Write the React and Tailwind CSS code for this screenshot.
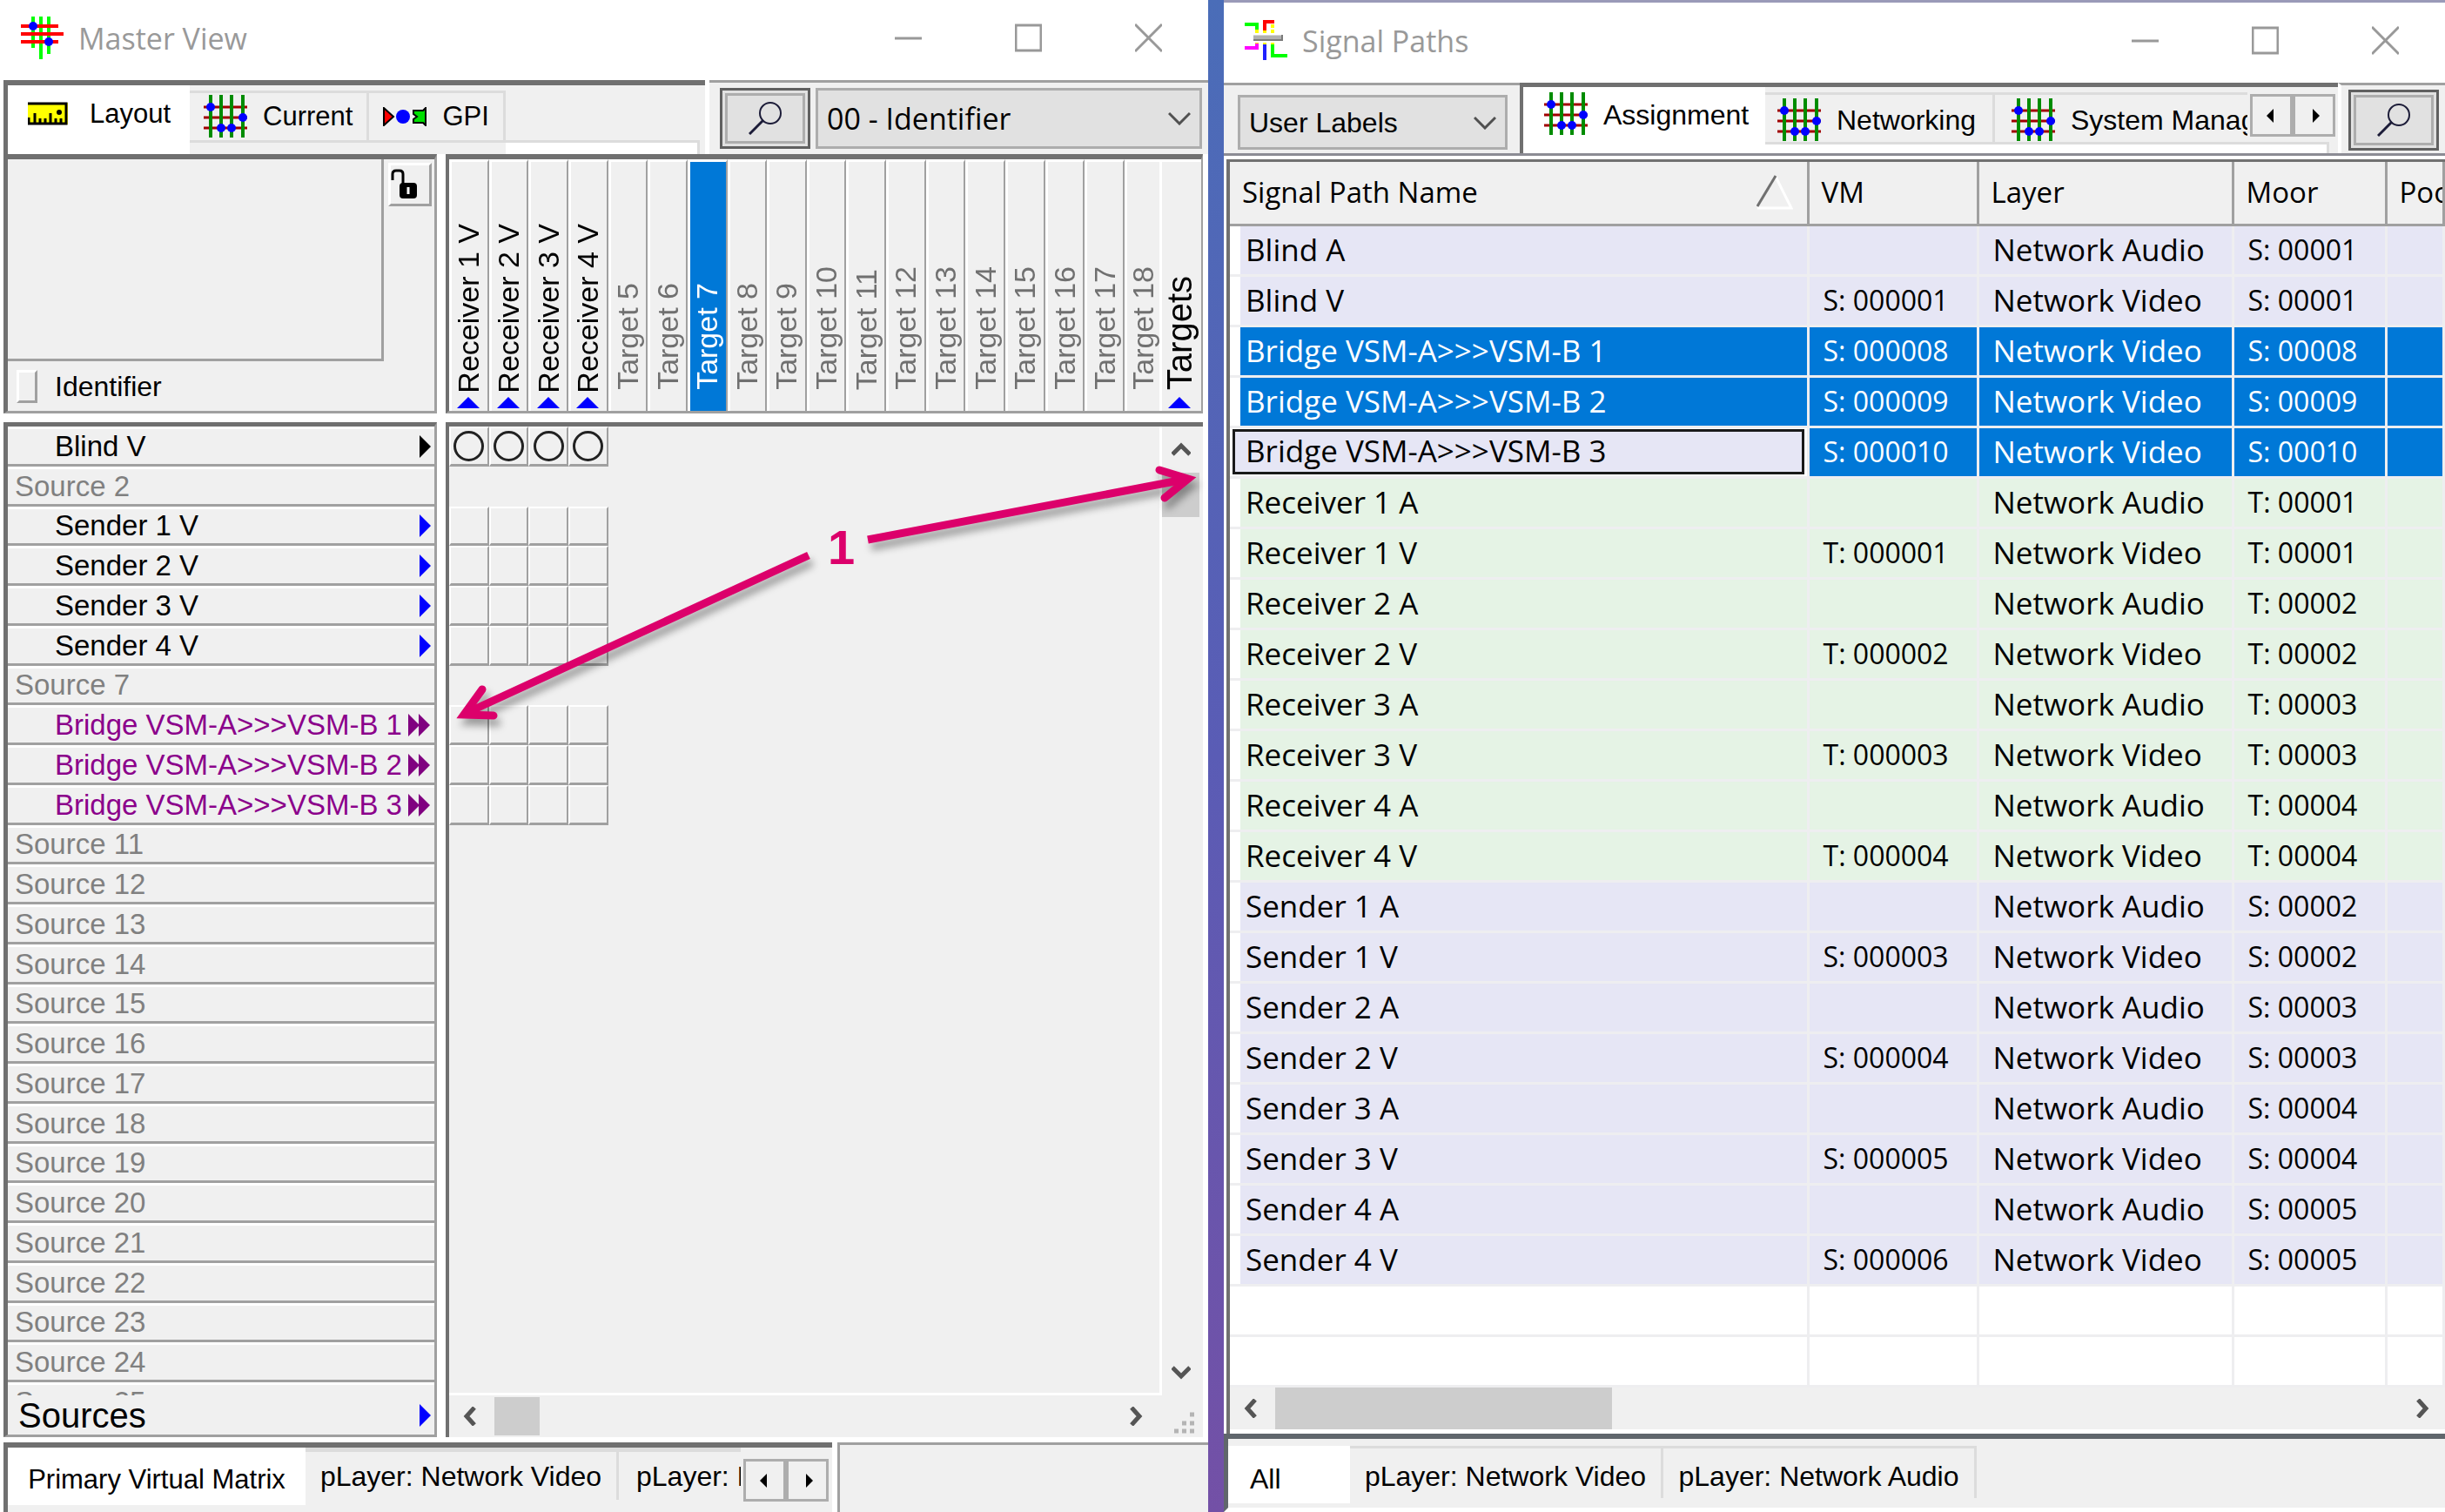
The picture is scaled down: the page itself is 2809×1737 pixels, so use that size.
import { useState } from 'react'
import clsx from 'clsx'

const sources = [
  { name: 'Blind V', kind: 'blind', cells: 'circle' },
  { name: 'Source 2', kind: 'empty' },
  { name: 'Sender 1 V', kind: 'sender', cells: 'plain' },
  { name: 'Sender 2 V', kind: 'sender', cells: 'plain' },
  { name: 'Sender 3 V', kind: 'sender', cells: 'plain' },
  { name: 'Sender 4 V', kind: 'sender', cells: 'plain' },
  { name: 'Source 7', kind: 'empty' },
  { name: 'Bridge VSM-A>>>VSM-B 1', kind: 'bridge', cells: 'plain' },
  { name: 'Bridge VSM-A>>>VSM-B 2', kind: 'bridge', cells: 'plain' },
  { name: 'Bridge VSM-A>>>VSM-B 3', kind: 'bridge', cells: 'plain' },
  ...Array.from({ length: 15 }, (_, i) => ({ name: `Source ${i + 11}`, kind: 'empty' })),
]

const targets = [
  ...[1, 2, 3, 4].map(n => ({ name: `Receiver ${n} V`, used: true })),
  ...Array.from({ length: 14 }, (_, i) => ({ name: `Target ${i + 5}`, selected: i === 2 })),
]

// name, vm, layer, moor, tone
const paths = [
  ['Blind A', '', 'Network Audio', 'S: 00001', 'source'],
  ['Blind V', 'S: 000001', 'Network Video', 'S: 00001', 'source'],
  ['Bridge VSM-A>>>VSM-B 1', 'S: 000008', 'Network Video', 'S: 00008', 'selected'],
  ['Bridge VSM-A>>>VSM-B 2', 'S: 000009', 'Network Video', 'S: 00009', 'selected'],
  ['Bridge VSM-A>>>VSM-B 3', 'S: 000010', 'Network Video', 'S: 00010', 'focus'],
  ['Receiver 1 A', '', 'Network Audio', 'T: 00001', 'target'],
  ['Receiver 1 V', 'T: 000001', 'Network Video', 'T: 00001', 'target'],
  ['Receiver 2 A', '', 'Network Audio', 'T: 00002', 'target'],
  ['Receiver 2 V', 'T: 000002', 'Network Video', 'T: 00002', 'target'],
  ['Receiver 3 A', '', 'Network Audio', 'T: 00003', 'target'],
  ['Receiver 3 V', 'T: 000003', 'Network Video', 'T: 00003', 'target'],
  ['Receiver 4 A', '', 'Network Audio', 'T: 00004', 'target'],
  ['Receiver 4 V', 'T: 000004', 'Network Video', 'T: 00004', 'target'],
  ['Sender 1 A', '', 'Network Audio', 'S: 00002', 'source'],
  ['Sender 1 V', 'S: 000003', 'Network Video', 'S: 00002', 'source'],
  ['Sender 2 A', '', 'Network Audio', 'S: 00003', 'source'],
  ['Sender 2 V', 'S: 000004', 'Network Video', 'S: 00003', 'source'],
  ['Sender 3 A', '', 'Network Audio', 'S: 00004', 'source'],
  ['Sender 3 V', 'S: 000005', 'Network Video', 'S: 00004', 'source'],
  ['Sender 4 A', '', 'Network Audio', 'S: 00005', 'source'],
  ['Sender 4 V', 'S: 000006', 'Network Video', 'S: 00005', 'source'],
  ['', '', '', '', 'blank'],
  ['', '', '', '', 'blank'],
]

const tones = {
  source: 'bg-[#e6e6f5]',
  target: 'bg-[#e5f3e5]',
  selected: 'bg-[#0078d7] text-white',
  focus: 'bg-[#0078d7] text-white',
  blank: 'bg-white',
}

function MasterIcon() {
  return (
    <svg viewBox="0 0 50 50" className="size-[50px] shrink-0" fill="none">
      <path d="M14 0v36M23 0v49M32 0v43" stroke="#00ff00" strokeWidth="4" />
      <path d="M0 11h43M0 20h49M0 29h43" stroke="#ff0000" strokeWidth="4" />
      <circle cx="14" cy="11" r="5" fill="#0000ff" />
      <circle cx="32" cy="29" r="5" fill="#0000ff" />
    </svg>
  )
}

function PathsIcon() {
  return (
    <svg viewBox="0 0 50 50" className="size-[50px] shrink-0" fill="none" strokeWidth="4">
      <path d="M0 6h14v8" stroke="#00ff00" />
      <path d="M23 14V3h11" stroke="#ff0000" />
      <path d="M14 12v4M23 13v3M32 6v4M32 12v4M14 27v3M23 27v3M32 27v3" stroke="#ffff00" />
      <path d="M10 21h33" stroke="#b0b0b0" strokeWidth="5" />
      <path d="M10 24h33v-6" stroke="#7a7a7a" strokeWidth="2" />
      <path d="M0 33h14v-5" stroke="#ff00ff" />
      <path d="M23 29v18" stroke="#2020ff" />
      <path d="M32 29v13h17" stroke="#00ff00" />
    </svg>
  )
}

function GridIcon() {
  return (
    <svg viewBox="0 0 50 50" className="size-[50px] shrink-0" fill="none">
      <path d="M0 14h50M0 26h50M0 38h50" stroke="#a00000" strokeWidth="3" />
      <path d="M8 0v49M20 0v49M32 0v49M45 0v49" stroke="#008c00" strokeWidth="4" />
      <circle cx="8" cy="14" r="5" fill="#0000ff" />
      <circle cx="45" cy="26" r="5" fill="#0000ff" />
      <circle cx="20" cy="38" r="5" fill="#0000ff" />
      <circle cx="32" cy="38" r="5" fill="#0000ff" />
    </svg>
  )
}

function RulerIcon() {
  return (
    <svg viewBox="0 0 48 28" className="h-[28px] w-[48px] shrink-0" fill="none">
      <path d="M0 1h46v25H0z" fill="#ffff00" />
      <path d="M0 2h44v23H1v-7M8 25V13M14 25v-6M20 25v-6M26 25V13M32 25v-6M38 25v-6" stroke="#000" strokeWidth="3" />
      <circle cx="36" cy="12" r="3" fill="#000" />
    </svg>
  )
}

function GpiIcon() {
  return (
    <svg viewBox="0 0 50 22" className="h-[22px] w-[50px] shrink-0">
      <path d="M1 1l11 10L1 21z" fill="#ff0000" stroke="#000" strokeWidth="2" />
      <circle cx="23" cy="11" r="8" fill="#0000ff" />
      <path d="M49 1v20l-3-3H35v-4l4-3-4-3V4h11z" fill="#00e000" stroke="#000" strokeWidth="2" />
    </svg>
  )
}

function LockIcon() {
  return (
    <svg viewBox="0 0 32 36" className="h-[36px] w-[32px]" fill="none">
      <path d="M2 13V6q0-4 4-4h4q4 0 4 4v12" stroke="#000" strokeWidth="3" />
      <rect x="10" y="16" width="20" height="18" rx="4" fill="#000" />
      <path d="M20 21v8" stroke="#fff" strokeWidth="3" />
    </svg>
  )
}

function SearchIcon() {
  return (
    <svg viewBox="0 0 38 38" className="size-[38px]" fill="none" stroke="#1c1c38" strokeWidth="2">
      <circle cx="25" cy="13" r="12" />
      <path d="M17 21L1 37" strokeWidth="3" />
    </svg>
  )
}

const chevrons = { left: 'M14 1L5 11l9 10', right: 'M8 1l9 10-9 10', up: 'M1 16L11 6l10 10', down: 'M1 6l10 10L21 6' }

function ScrollArrow({ dir, className }) {
  return (
    <button type="button" aria-label={`Scroll ${dir}`} className={clsx('flex items-center justify-center', className)}>
      <svg viewBox="0 0 22 22" className="size-[22px]" fill="none" stroke="#555" strokeWidth="5"><path d={chevrons[dir]} /></svg>
    </button>
  )
}

function TabScroller() {
  return (
    <div className="flex h-[49px] shrink-0">
      {['M11 1v16L3 9z', 'M7 1v16l8-8z'].map((d, i) => (
        <button key={d} type="button" aria-label={i ? 'Next tab' : 'Previous tab'} className="flex w-[49px] items-center justify-center border-[3px] border-[#adadad] bg-[#f0f0f0]">
          <svg viewBox="0 0 18 18" className="size-[18px]"><path d={d} /></svg>
        </button>
      ))}
    </div>
  )
}

function SearchButton() {
  return (
    <button type="button" aria-label="Search" className="h-[70px] w-[104px] shrink-0 border-[3px] border-[#606060] bg-[#e1e1e1] p-[3px]">
      <span className="flex h-full items-center justify-center border-[3px] border-[#adadad]"><SearchIcon /></span>
    </button>
  )
}

function Combo({ label, options, className }) {
  return (
    <div className={clsx('relative', className)}>
      <select aria-label={label} className="size-full appearance-none border-[3px] border-[#adadad] bg-[#e1e1e1] pl-[10px] text-black">
        {options.map(o => <option key={o}>{o}</option>)}
      </select>
      <svg viewBox="0 0 26 16" className="pointer-events-none absolute right-[13px] top-1/2 h-[16px] w-[26px] -translate-y-1/2" fill="none" stroke="#505050" strokeWidth="3"><path d="M1 2l12 12L25 2" /></svg>
    </div>
  )
}

function TitleBar({ icon, title }) {
  return (
    <header className="flex h-[92px] shrink-0 items-center bg-white pb-[4px] pl-[24px] font-['Open_Sans',sans-serif] text-[34px] text-[#999]">
      {icon}
      <h1 className="ml-[16px] flex-1">{title}</h1>
      {['M0 17h31', 'M1 2h29v29H1z', 'M0 1l31 31M31 1L0 32'].map((d, i) => (
        <button key={d} type="button" aria-label={['Minimize', 'Maximize', 'Close'][i]} className="flex w-[138px] justify-center">
          <svg viewBox="0 0 31 34" className="h-[34px] w-[31px]" fill="none" stroke="#999" strokeWidth="3"><path d={d} /></svg>
        </button>
      ))}
    </header>
  )
}

function SourceRow({ source }) {
  const { name, kind } = source
  return (
    <li className={clsx('flex min-h-0 items-center justify-between overflow-hidden border-b-[3px] border-t-[3px] border-b-[#a0a0a0] border-t-white pr-[4px] leading-[36px]',
      kind === 'empty' ? 'pl-[8px] text-[#808080]' : 'pl-[54px]',
      kind === 'bridge' && 'text-[#8b008b]')}>
      <span className="whitespace-nowrap">{name}</span>
      {kind === 'blind' && <svg viewBox="0 0 13 26" className="h-[26px] w-[13px]"><path d="M0 0l13 13L0 26z" /></svg>}
      {kind === 'sender' && <svg viewBox="0 0 13 26" className="h-[26px] w-[13px]"><path d="M0 0l13 13L0 26z" fill="#00f" /></svg>}
      {kind === 'bridge' && <svg viewBox="0 0 26 26" className="h-[26px] w-[26px]"><path d="M0 0l13 13L0 26zM12 0l13 13-13 13z" fill="#800080" /></svg>}
    </li>
  )
}

function MatrixRow({ cells }) {
  return (
    <div className="grid min-h-0 grid-cols-[repeat(17,minmax(0,1fr))_40px] overflow-hidden">
      {cells && [0, 1, 2, 3].map(i => (
        <div key={i} className="flex min-h-0 items-center justify-center border-2 border-b-[3px] border-b-[#a0a0a0] border-l-white border-r-[#a0a0a0] border-t-white">
          {cells === 'circle' && <span className="size-[35px] shrink-0 rounded-full border-[3px] border-[#222]" />}
        </div>
      ))}
    </div>
  )
}

function MasterView() {
  const [tab, setTab] = useState('Layout')
  const tabs = [['Layout', <RulerIcon />], ['Current', <GridIcon />], ['GPI', <GpiIcon />]]
  return (
    <section className="flex min-h-0 min-w-0 flex-col bg-white">
      <TitleBar icon={<MasterIcon />} title="Master View" />

      <div className="flex h-[85px] shrink-0 pl-[4px]">
        <div className="flex w-[806px] flex-col border-l-[5px] border-t-[6px] border-[#707070] bg-white">
          <div role="tablist" className="flex h-[80px] items-start bg-[#f0f0f0] text-[31px]">
            {tabs.map(([name, icon]) => (
              <button key={name} type="button" role="tab" aria-selected={tab === name} onClick={() => setTab(name)}
                className={clsx('flex shrink-0 items-center',
                  tab === name ? 'h-[79px] gap-[23px] bg-white pb-[14px] pl-[23px] pr-[22px]' : 'mt-[6px] h-[60px] gap-[18px] border-[3px] border-l-0 border-[#dcdcdc] pl-[16px] pr-[16px]')}>
                {icon}{name}
              </button>
            ))}
            <div className="mr-[6px] mt-[63px] h-[16px] flex-1 border-r-[3px] border-t-[3px] border-[#dcdcdc] bg-white" />
          </div>
        </div>
        <div className="ml-[5px] flex flex-1 items-start gap-[6px] border-t-[3px] border-[#a0a0a0] bg-[#f0f0f0] pl-[12px] pr-[7px] pt-[6px]">
          <SearchButton />
          <Combo label="Identifier" options={['00 - Identifier']} className="h-[70px] flex-1 font-['Open_Sans',sans-serif] text-[34px]" />
        </div>
      </div>

      <div className="flex h-[298px] shrink-0 gap-[10px] pl-[4px] pr-[6px]">
        <div className="flex w-[498px] flex-col border-b-[3px] border-l-[5px] border-r-[3px] border-t-[6px] border-[#a0a0a0] border-l-[#707070] border-t-[#707070] bg-[#f0f0f0]">
          <div className="flex h-[232px] justify-between pr-[3px]">
            <div className="w-[432px] border-b-[3px] border-r-[3px] border-[#a0a0a0]" />
            <button type="button" aria-label="Unlock" className="mt-[4px] flex h-[50px] w-[50px] items-center border-[3px] border-b-[#a0a0a0] border-l-white border-r-[#a0a0a0] border-t-white">
              <LockIcon />
            </button>
          </div>
          <label className="flex flex-1 items-center gap-[20px] pl-[10px]">
            <input type="checkbox" className="h-[38px] w-[24px] appearance-none border-[3px] border-b-[#a0a0a0] border-l-white border-r-[#a0a0a0] border-t-white" />
            Identifier
          </label>
        </div>
        <div className="grid flex-1 grid-cols-[repeat(17,minmax(0,1fr))_40px_48px] border-b-[3px] border-l-4 border-r-2 border-t-[6px] border-[#a0a0a0] border-l-[#707070] border-t-[#707070] bg-[#f0f0f0] text-[34px]">
          {targets.map((t, i) => (
            <div key={t.name} className={clsx('flex flex-col items-center justify-end overflow-hidden border-l-[3px] border-t-[3px] border-white pb-[3px] pr-[2px]',
              i < 17 && 'border-r-2 border-r-[#a0a0a0]',
              t.selected && 'bg-[#0078d7] text-white',
              !t.used && !t.selected && 'text-[#707070]')}>
              <span className={clsx('rotate-180 whitespace-nowrap leading-[38px] [writing-mode:vertical-rl]', t.used ? 'mb-[4px]' : 'mb-[21px]')}>{t.name}</span>
              {t.used && <svg viewBox="0 0 26 13" className="h-[13px] w-[26px] shrink-0"><path d="M13 0l13 13H0z" fill="#00f" /></svg>}
            </div>
          ))}
          <div className="flex flex-col items-center justify-end border-l-[3px] border-t-[3px] border-white pb-[3px] pr-[6px] text-[40px]">
            <span className="mb-[8px] rotate-180 leading-[38px] [writing-mode:vertical-rl]">Targets</span>
            <svg viewBox="0 0 26 13" className="h-[13px] w-[26px] shrink-0"><path d="M13 0l13 13H0z" fill="#00f" /></svg>
          </div>
        </div>
      </div>

      <div className="mb-[6px] mt-[10px] flex min-h-0 flex-1 gap-[10px] pl-[4px] pr-[6px]">
        <div className="flex min-h-0 w-[498px] flex-col border-b-[3px] border-l-[5px] border-r-[3px] border-t-[5px] border-[#a0a0a0] border-l-[#707070] border-t-[#707070] bg-[#f0f0f0]">
          <ul className="grid min-h-0 flex-1 grid-rows-[repeat(24,minmax(0,1fr))_15px] text-[33px]">
            {sources.slice(0, 24).map(s => <SourceRow key={s.name} source={s} />)}
            <li className="overflow-hidden border-t-[3px] border-white pl-[8px] leading-[40px] text-[#808080]">{sources[24].name}</li>
          </ul>
          <div className="flex h-[45px] shrink-0 items-center justify-between bg-[#f0f0f0] pl-[12px] pr-[4px] text-[40px]">
            Sources
            <svg viewBox="0 0 13 26" className="h-[26px] w-[13px]"><path d="M0 0l13 13L0 26z" fill="#00f" /></svg>
          </div>
        </div>
        <div className="grid min-h-0 flex-1 grid-cols-[minmax(0,1fr)_50px] grid-rows-[minmax(0,1fr)_48px] border-l-4 border-t-[5px] border-[#707070] bg-[#f0f0f0]">
          <div className="grid min-h-0 grid-rows-[repeat(24,minmax(0,1fr))_15px]">
            {sources.slice(0, 24).map(s => <MatrixRow key={s.name} cells={s.cells} />)}
            <div className="border-b-[3px] border-white" />
          </div>
          <div className="flex flex-col border-l-[3px] border-white pr-[4px]">
            <ScrollArrow dir="up" className="h-[53px]" />
            <div className="h-[51px] bg-[#cdcdcd]" />
            <div className="flex-1" />
            <ScrollArrow dir="down" className="h-[54px]" />
          </div>
          <div className="flex">
            <ScrollArrow dir="left" className="w-[52px]" />
            <div className="my-[2px] w-[52px] bg-[#cdcdcd]" />
            <div className="flex-1" />
            <ScrollArrow dir="right" className="w-[58px]" />
          </div>
          <svg viewBox="0 0 24 26" className="mb-[4px] ml-auto mr-[10px] mt-auto h-[26px] w-[24px]" stroke="#b4b4b4" strokeWidth="5" strokeDasharray="5 4">
            <path d="M1 23h24M10 14h16M19 4h6" />
          </svg>
        </div>
      </div>

      <div className="flex h-[80px] shrink-0 pl-[4px]">
        <div role="tablist" className="flex w-[952px] items-start border-l-[5px] border-t-[6px] border-[#707070] bg-[#f0f0f0]">
          <button type="button" role="tab" aria-selected="true" className="h-[66px] w-[342px] shrink-0 whitespace-nowrap bg-white pt-[8px] text-[31px]">Primary Virtual Matrix</button>
          <button type="button" role="tab" aria-selected="false" className="h-[60px] w-[360px] shrink-0 whitespace-nowrap border-r-[3px] border-t-[5px] border-[#dcdcdc]">pLayer: Network Video</button>
          <button type="button" role="tab" aria-selected="false" className="mr-[3px] h-[60px] min-w-0 flex-1 overflow-hidden whitespace-nowrap border-t-[5px] border-[#dcdcdc] pl-[20px] text-left">pLayer: Network Audio</button>
          <div className="mr-[4px] mt-[13px]"><TabScroller /></div>
        </div>
        <div className="ml-[6px] flex-1 border-l-[3px] border-t-[3px] border-[#a0a0a0] bg-[#f0f0f0]" />
      </div>
    </section>
  )
}

function SignalPaths() {
  const head = 'border-b-[3px] border-r-[3px] border-[#a0a0a0] bg-[#f0f0f0] pl-[14px] text-left font-normal'
  return (
    <section className="flex min-h-0 min-w-0 flex-col border-t-[3px] border-[#9a9ab8] bg-white">
      <TitleBar icon={<PathsIcon />} title="Signal Paths" />

      <div className="flex h-[84px] shrink-0 border-b-[3px] border-[#8c8c94] bg-[#f0f0f0]">
        <div className="w-[340px] shrink-0 border-t-[3px] border-[#a0a0a0] pl-[16px] pt-[11px]">
          <Combo label="Labels" options={['User Labels']} className="h-[63px] w-[310px]" />
        </div>
        <div role="tablist" className="flex min-w-0 flex-1 items-start border-l-[4px] border-t-[5px] border-[#707070]">
          <button type="button" role="tab" aria-selected="true" className="flex h-[76px] w-[278px] shrink-0 items-start gap-[18px] bg-white pl-[24px] pt-[6px] leading-[52px]"><GridIcon />Assignment</button>
          <div className="relative flex h-[76px] min-w-0 flex-1 items-start">
            <div className="mt-[6px] flex h-[60px] min-w-0 flex-1 overflow-hidden border-t-[3px] border-[#dcdcdc]">
              <button type="button" role="tab" aria-selected="false" className="flex w-[264px] shrink-0 items-center gap-[18px] border-r-[3px] border-[#dcdcdc] pl-[14px]"><GridIcon />Networking</button>
              <button type="button" role="tab" aria-selected="false" className="flex shrink-0 items-center gap-[18px] whitespace-nowrap pl-[19px]"><GridIcon />System Management</button>
            </div>
            <div className="ml-[3px] mr-[3px] mt-[8px]"><TabScroller /></div>
            <div className="absolute bottom-0 left-0 right-[10px] h-[13px] border-r-[3px] border-t-[3px] border-[#dcdcdc] bg-white" />
          </div>
        </div>
        <div className="w-[123px] shrink-0 border-l-[4px] border-t-[3px] border-[#a0a0a0] border-l-white pl-[8px] pt-[5px]"><SearchButton /></div>
      </div>

      <div className="ml-[3px] mt-[4px] flex min-h-0 flex-1 flex-col overflow-hidden border-l-[4px] border-t-[3px] border-[#707070]">
        <table className="w-full shrink-0 table-fixed border-collapse font-['Open_Sans',sans-serif] text-[35px] leading-[40px]">
          <colgroup>
            <col className="w-[12px]" />
            <col className="w-[652px]" />
            <col className="w-[195px]" />
            <col className="w-[293px]" />
            <col className="w-[176px]" />
            <col />
          </colgroup>
          <thead className="text-[33px]">
            <tr className="h-[72px]">
              <th colSpan={2} className={head}>
                <span className="flex items-center justify-between pr-[16px]">
                  Signal Path Name
                  <svg viewBox="0 0 42 40" className="h-[40px] w-[42px]" fill="none" strokeWidth="3">
                    <path d="M22 2l18 36H1" stroke="#fff" />
                    <path d="M1 36L22 1" stroke="#707070" />
                  </svg>
                </span>
              </th>
              <th className={head}>VM</th>
              <th className={head}>Layer</th>
              <th className={head}>Moor</th>
              <th className={clsx(head, 'overflow-hidden')}>Pool</th>
            </tr>
          </thead>
          <tbody>
            {paths.map(([name, vm, layer, moor, tone], i) => {
              const cell = clsx('whitespace-nowrap border-b-[3px] border-r-[3px] border-[#eeeef0] py-0', tones[tone])
              return (
                <tr key={i} className="h-[58px]">
                  {tone !== 'focus' && <td className="border-b-[3px] border-[#eeeef0] bg-white" />}
                  {tone === 'focus'
                    ? <td colSpan={2} className="border-b-[3px] border-r-[3px] border-[#eeeef0] bg-white px-[3px] py-0"><span className="block h-[52px] border-[3px] border-[#1a1a1a] bg-[#e6e6f5] pl-[12px] leading-[44px]">{name}</span></td>
                    : <td className={clsx(cell, 'pl-[6px]')}>{name}</td>}
                  <td className={clsx(cell, 'pl-[16px] text-[32px]')}>{vm}</td>
                  <td className={clsx(cell, 'pl-[16px]')}>{layer}</td>
                  <td className={clsx(cell, 'pl-[16px] text-[32px]')}>{moor}</td>
                  <td className={cell} />
                </tr>
              )
            })}
          </tbody>
        </table>
        <div className="flex h-[48px] shrink-0 bg-[#f0f0f0]">
          <ScrollArrow dir="left" className="w-[52px]" />
          <div className="w-[387px] bg-[#cdcdcd]" />
          <div className="flex-1" />
          <ScrollArrow dir="right" className="w-[56px]" />
        </div>
      </div>

      <div role="tablist" className="flex h-[90px] shrink-0 items-start border-b-[5px] border-l-[5px] border-t-[6px] border-[#60666c] border-b-white bg-[#f0f0f0] pt-[8px]">
        <button type="button" role="tab" aria-selected="true" className="h-[66px] w-[140px] shrink-0 bg-white pl-[25px] pt-[10px] text-left">All</button>
        <button type="button" role="tab" aria-selected="false" className="h-[60px] w-[360px] border-r-[3px] border-t-[3px] border-[#dcdcdc] pt-[6px]">pLayer: Network Video</button>
        <button type="button" role="tab" aria-selected="false" className="h-[60px] w-[360px] border-r-[3px] border-t-[3px] border-[#dcdcdc] pt-[6px]">pLayer: Network Audio</button>
      </div>
    </section>
  )
}

function Callout() {
  return (
    <svg viewBox="0 0 2809 1737" className="pointer-events-none absolute inset-0 size-full" fill="none">
      <g className="drop-shadow-[4px_8px_4px_rgba(0,0,0,0.35)]" stroke="#dc006b" strokeWidth="9">
        <path d="M929 638L536 819M997 620L1360 551" />
        <path d="M554 792L533 821L567 822M1332 540L1365 550L1338 572" strokeLinecap="round" />
      </g>
      <text x="951" y="648" fill="#dc006b" className="text-[56px] font-bold">1</text>
    </svg>
  )
}

export default function App() {
  return (
    <main className="relative grid h-screen grid-cols-[1388fr_18px_1403fr] grid-rows-[minmax(0,1fr)] overflow-hidden bg-white font-['Liberation_Sans',Arial,sans-serif] text-[32px] leading-[40px] text-black">
      <MasterView />
      <div className="bg-linear-to-b from-[#4a6db8] via-[#5a5cb5] to-[#7350a6]" />
      <SignalPaths />
      <Callout />
    </main>
  )
}
